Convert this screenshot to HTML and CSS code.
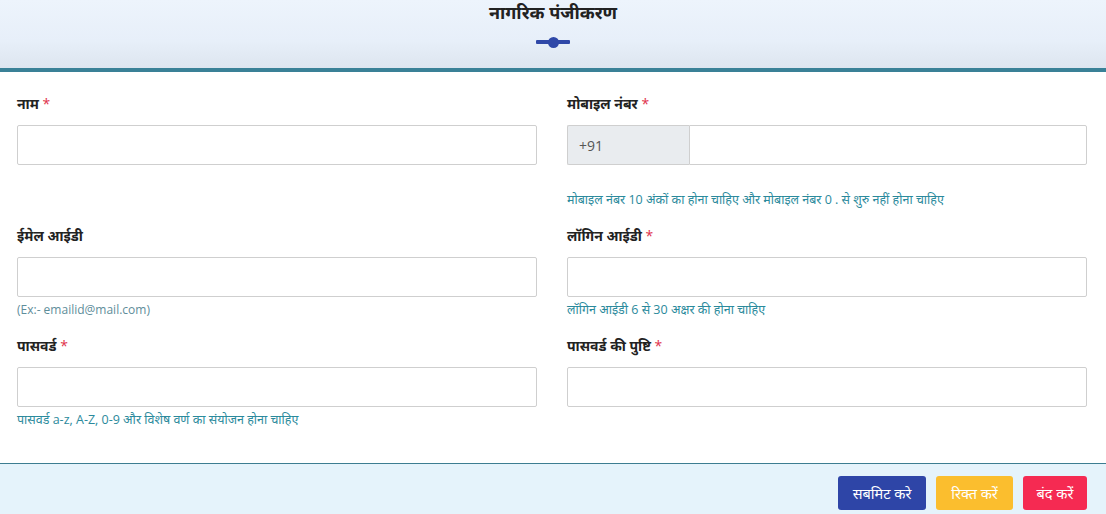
FILE: index.html
```html
<!DOCTYPE html>
<html lang="hi">
<head>
<meta charset="utf-8">
<title>नागरिक पंजीकरण</title>
<link rel="stylesheet" href="styles.css">
</head>
<body>
<div class="modal">
  <header class="head">
    <h1 class="title">नागरिक पंजीकरण</h1>
    <div class="divider"><span class="dot"></span></div>
  </header>
  <main class="body">
    <div class="grid">
      <div class="field">
        <label class="label">नाम <span class="req">*</span></label>
        <input class="input" type="text">
      </div>
      <div class="field">
        <label class="label">मोबाइल नंबर <span class="req">*</span></label>
        <div class="group">
          <span class="addon">+91</span>
          <input class="input grow" type="text">
        </div>
        <div class="hint hint-far">मोबाइल नंबर 10 अंकों का होना चाहिए और मोबाइल नंबर 0 . से शुरु नहीं होना चाहिए</div>
      </div>
      <div class="field">
        <label class="label">ईमेल आईडी</label>
        <input class="input" type="text">
        <div class="hint muted">(Ex:- emailid@mail.com)</div>
      </div>
      <div class="field">
        <label class="label">लॉगिन आईडी <span class="req">*</span></label>
        <input class="input" type="text">
        <div class="hint">लॉगिन आईडी 6 से 30 अक्षर की होना चाहिए</div>
      </div>
      <div class="field">
        <label class="label">पासवर्ड <span class="req">*</span></label>
        <input class="input" type="password">
        <div class="hint">पासवर्ड a-z, A-Z, 0-9 और विशेष वर्ण का संयोजन होना चाहिए</div>
      </div>
      <div class="field">
        <label class="label">पासवर्ड की पुष्टि <span class="req">*</span></label>
        <input class="input" type="password">
      </div>
    </div>
  </main>
  <footer class="foot">
    <button class="btn btn-blue">सबमिट करे</button>
    <button class="btn btn-yellow">रिक्त करें</button>
    <button class="btn btn-red">बंद करें</button>
  </footer>
</div>
</body>
</html>
```

FILE: styles.css
```css
* { box-sizing: border-box; }
html, body {
  margin: 0;
  padding: 0;
  background: #ffffff;
}
body {
  font-family: "Open Sans", "Noto Sans", sans-serif;
  color: #222;
  width: 1106px;
  height: 514px;
  overflow: hidden;
}
.modal {
  display: flex;
  flex-direction: column;
  height: 514px;
}
.head {
  height: 72px;
  background: linear-gradient(to bottom, #edf4fc 0%, #e7eff9 60%, #dde5ef 100%);
  border-bottom: 4px solid #3a8197;
  display: flex;
  flex-direction: column;
  align-items: center;
}
.title {
  margin: 0;
  font-size: 18px;
  line-height: 24px;
  font-weight: 700;
  color: #222;
}
.divider {
  margin-top: 16px;
  width: 34px;
  height: 4px;
  background: #2f48a8;
  display: flex;
  align-items: center;
  justify-content: center;
  border-radius: 1px;
}
.dot {
  width: 11px;
  height: 11px;
  border-radius: 50%;
  background: #2f48a8;
}
.body {
  flex: 1;
  padding: 22px 19px 0 17px;
}
.grid {
  display: grid;
  grid-template-columns: 520px 520px;
  column-gap: 30px;
  row-gap: 17px;
  align-items: start;
}
.field {
  display: flex;
  flex-direction: column;
}
.label {
  font-size: 14px;
  line-height: 20px;
  font-weight: 700;
  color: #222;
  margin-bottom: 11px;
}
.req { color: #e0314a; font-weight: 400; }
.input {
  height: 40px;
  width: 100%;
  border: 1px solid #cfcfcf;
  border-radius: 2px;
  background: #fff;
  font: inherit;
  padding: 0 12px;
  outline: none;
}
.group {
  display: flex;
  height: 40px;
}
.addon {
  width: 122px;
  flex: none;
  background: #e9ecef;
  border: 1px solid #cfcfcf;
  border-right: none;
  border-radius: 2px 0 0 2px;
  display: flex;
  align-items: center;
  padding-left: 11px;
  font-size: 14px;
  color: #555;
}
.grow { flex: 1; border-radius: 0 2px 2px 0; }
.hint {
  margin-top: 4px;
  font-size: 12.5px;
  line-height: 18px;
  color: #2b8a9c;
}
.hint-far { margin-top: 26px; }
.muted { color: #5e8d9a; font-size: 12px; }
.foot {
  height: 51px;
  border-top: 1px solid #3c7d91;
  background: #e5f3fb;
  display: flex;
  justify-content: flex-end;
  align-items: flex-start;
  gap: 10px;
  padding: 12px 19px 0 0;
}
.btn {
  height: 34px;
  border: none;
  border-radius: 3px;
  color: #fff;
  font-family: "Open Sans", "Noto Sans", sans-serif;
  font-size: 14.5px;
  padding: 0;
  cursor: pointer;
}
.btn-blue { background: #2e45a7; width: 88px; }
.btn-yellow { background: #fbbe2e; width: 77px; }
.btn-red { background: #f52a52; width: 64px; }
```
